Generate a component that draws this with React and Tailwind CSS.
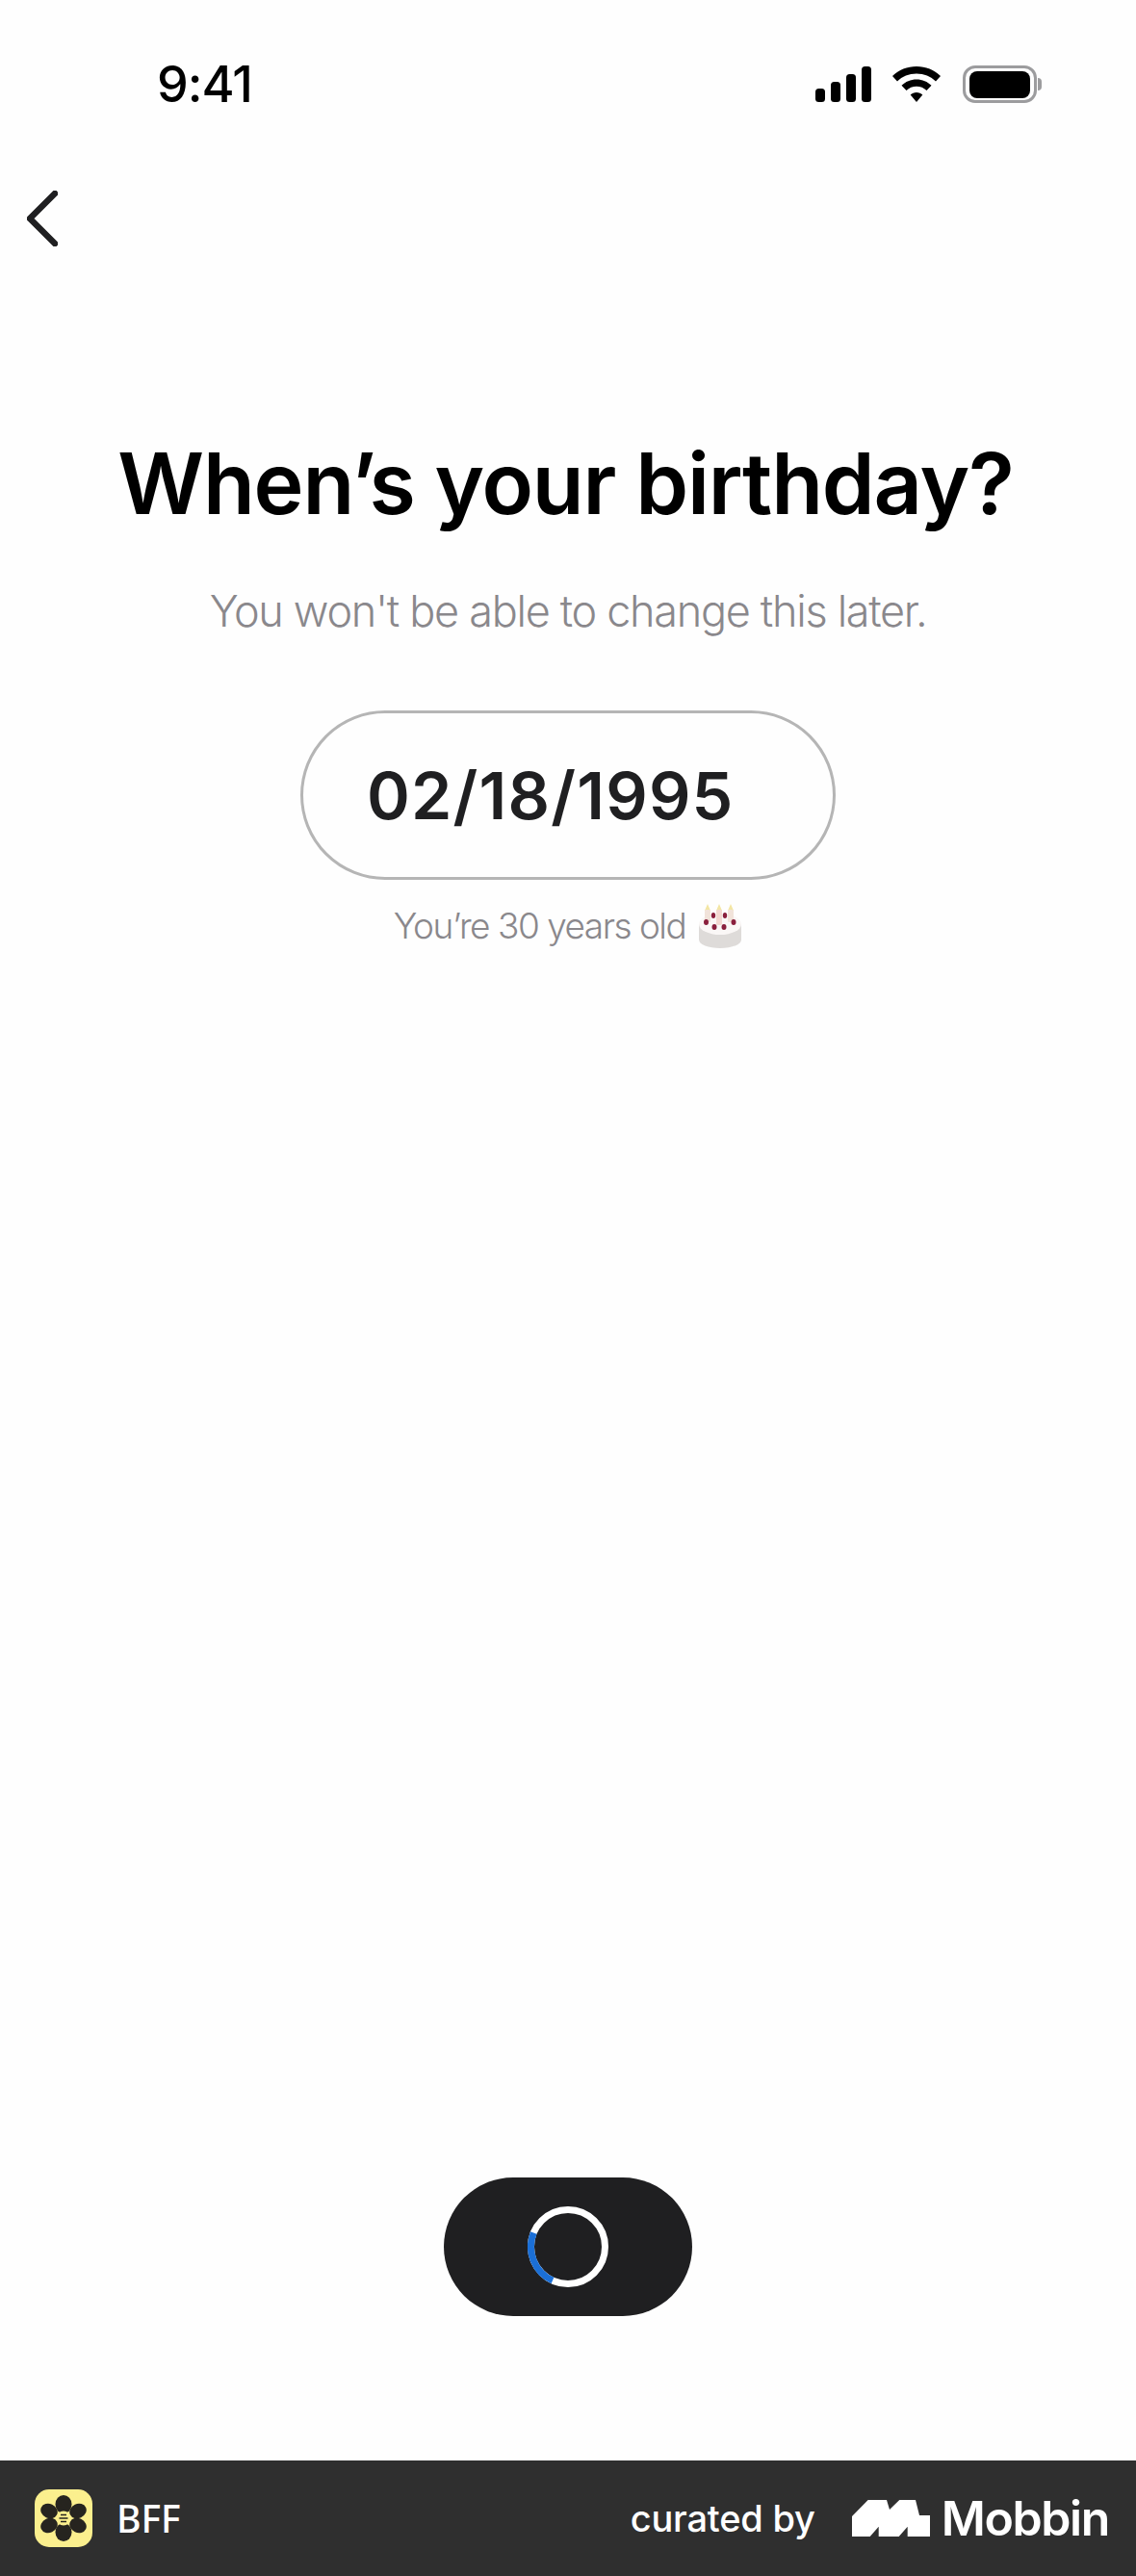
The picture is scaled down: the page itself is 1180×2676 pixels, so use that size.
const Signal = () => (
  <svg width="58" height="37" viewBox="0 0 58 37" fill="#000">
    <rect x="0" y="23" width="10" height="14" rx="3.5" />
    <rect x="16" y="16" width="10" height="21" rx="3.5" />
    <rect x="32" y="8" width="10" height="29" rx="3.5" />
    <rect x="48" y="0" width="10" height="37" rx="3.5" />
  </svg>
);

const Wifi = () => (
  <svg width="50" height="37" viewBox="0 0 50 37" fill="#000">
    <path d="M25 0C34.500 0 43.500 3.600 50 10L45 15.500C39.800 10.500 32.800 7.600 25 7.600C17.200 7.600 10.200 10.500 5 15.500L0 10C6.500 3.600 15.500 0 25 0Z" />
    <path d="M25 13.500C31 13.500 36.500 15.800 40.500 19.800L35.500 25C32.700 22.300 29 20.800 25 20.800C21 20.800 17.300 22.300 14.500 25L9.500 19.800C13.500 15.800 19 13.500 25 13.500Z" />
    <path d="M25 27C27.500 27 29.700 28 31.300 29.500L25 37L18.700 29.500C20.300 28 22.500 27 25 27Z" />
  </svg>
);

const Battery = () => (
  <div className="ml-[1px] flex items-center">
    <div className="flex h-[39px] w-[77px] items-center justify-center rounded-[13px] border-[3px] border-[#9c9c9e]">
      <div className="h-[28px] w-[63px] rounded-[8px] bg-black" />
    </div>
    <div className="ml-[1px] h-[13px] w-[4px] rounded-r-full bg-[#9c9c9e]" />
  </div>
);

const CakeEmoji = () => (
  <svg width="46" height="46" viewBox="0 0 46 46">
    <path d="M1 21V37C1 42.500 11 46 23 46C35 46 45 42.500 45 37V21Z" fill="#dedbd9" />
    <ellipse cx="23" cy="21" rx="22" ry="11" fill="#faf7f6" />
    <path d="M10 0L13 7H7Z M22 0L25 7H19Z M34 0L37 7H31Z" fill="#f3e6a4" />
    <rect x="7" y="6" width="6" height="13" rx="1.500" fill="#f1e3da" />
    <rect x="19" y="6" width="6" height="16" rx="1.500" fill="#f2d9d2" />
    <rect x="31" y="6" width="6" height="13" rx="1.500" fill="#f1e3da" />
    <g fill="#8a1f3d">
      <ellipse cx="16" cy="12" rx="2.200" ry="3" />
      <ellipse cx="28" cy="12" rx="2.200" ry="3" />
      <ellipse cx="8.500" cy="19" rx="2.500" ry="3" />
      <ellipse cx="17" cy="24" rx="2.500" ry="3" />
      <ellipse cx="27" cy="24" rx="2.500" ry="3" />
      <ellipse cx="37" cy="19" rx="2.500" ry="3" />
    </g>
  </svg>
);

const Spinner = () => (
  <svg width="84" height="84" viewBox="0 0 84 84" fill="none">
    <circle cx="42" cy="42" r="38.500" stroke="#fff" strokeWidth="7" />
    <path d="M6.300 27.500A38.500 38.500 0 0 0 26 77" stroke="#1b6fd6" strokeWidth="7" />
  </svg>
);

const BffIcon = () => (
  <div className="flex h-[60px] w-[60px] items-center justify-center rounded-[15px] bg-[#fbef8e]">
    <svg width="48" height="48" viewBox="0 0 48 48">
      <g fill="#26241f">
        <ellipse cx="24" cy="9.500" rx="8.500" ry="9.500" />
        <ellipse cx="24" cy="38.500" rx="8.500" ry="9.500" />
        <ellipse cx="9" cy="16.500" rx="9" ry="7.500" transform="rotate(25 9 16.500)" />
        <ellipse cx="39" cy="16.500" rx="9" ry="7.500" transform="rotate(-25 39 16.500)" />
        <ellipse cx="9" cy="31.500" rx="9" ry="7.500" transform="rotate(-25 9 31.500)" />
        <ellipse cx="39" cy="31.500" rx="9" ry="7.500" transform="rotate(25 39 31.500)" />
      </g>
      <circle cx="24" cy="24" r="7.500" fill="#fbef8e" />
      <path d="M21 20.500H27M19.500 24H28.500M21 27.500H27" stroke="#26241f" strokeWidth="1.500" />
    </svg>
  </div>
);

const MobbinLogo = () => (
  <svg width="81" height="38" viewBox="0 0 81 38" fill="#fff">
    <path d="M0 38V17L16.700 0H36L39 10L49.300 0H66L70 16H81V38H57.700V27.700L48.700 38H27.700V27.700L18.700 38Z" />
  </svg>
);

export default function App() {
  return (
    <div
      className="flex h-[2676px] w-[1180px] flex-col bg-[#fefefe]"
      style={{ fontFamily: "Inter, 'Liberation Sans', sans-serif" }}
    >
      {/* Status bar */}
      <div className="flex items-center justify-between pt-[68px] pr-[98px] pl-[163px]">
        <span className="text-[52px] leading-[39px] font-medium tracking-[-1px] text-black">9:41</span>
        <div className="flex items-center gap-[22px]">
          <Signal />
          <Wifi />
          <Battery />
        </div>
      </div>

      {/* Back */}
      <div className="pt-[91px] pl-[28px]">
        <svg width="32" height="58" viewBox="0 0 32 58" fill="none">
          <path d="M29 3L3 29L29 55" stroke="#1f1f21" strokeWidth="6.500" strokeLinecap="round" strokeLinejoin="round" />
        </svg>
      </div>

      {/* Content */}
      <div className="flex flex-col items-center pt-[196px]">
        <h1 className="pr-[5px] text-[88px] leading-[100px] font-semibold tracking-[-1.2px] text-black">
          When’s your birthday?
        </h1>
        <p className="mt-[55px] text-[45px] leading-[56px] font-light tracking-[-1.3px] text-[#8a888c]">
          You won't be able to change this later.
        </p>
        <div className="mt-[75px] flex h-[176px] w-[556px] items-center rounded-full border-[3px] border-[#b5b5b5] pl-[66px]">
          <span className="text-[68px] leading-none font-semibold tracking-[1.2px] text-[#1f1f21]">02/18/1995</span>
        </div>
        <div className="mt-[25px] flex items-center gap-[13px]">
          <span className="text-[37px] leading-[46px] font-light tracking-[-1.5px] text-[#8a888c]">
            You’re 30 years old
          </span>
          <CakeEmoji />
        </div>
      </div>

      {/* Loading button */}
      <div className="mt-auto flex justify-center pb-[150px]">
        <div className="flex h-[144px] w-[258px] items-center justify-center rounded-full bg-[#1f1f21]">
          <Spinner />
        </div>
      </div>

      {/* Footer */}
      <div className="flex h-[120px] items-center justify-between bg-[#2f2f2f] pr-[28px] pl-[36px]">
        <div className="flex items-center gap-[25px]">
          <BffIcon />
          <span className="text-[39px] font-medium text-white [font-family:'Noto_Sans',sans-serif]">BFF</span>
        </div>
        <div className="flex items-center">
          <span className="text-[38px] font-medium tracking-[-0.2px] text-white">curated by</span>
          <div className="ml-[38px] flex items-center gap-[12px]">
            <MobbinLogo />
            <span className="text-[50px] leading-[38px] font-semibold tracking-[-1.4px] text-white">Mobbin</span>
          </div>
        </div>
      </div>
    </div>
  );
}
